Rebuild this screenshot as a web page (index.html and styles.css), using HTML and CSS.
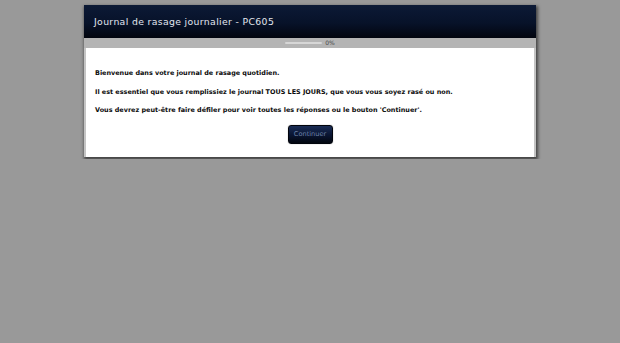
FILE: index.html
```
<!DOCTYPE html>
<html lang="fr">
<head>
<meta charset="utf-8">
<title>Journal de rasage journalier - PC605</title>
<link rel="stylesheet" href="styles.css">
</head>
<body>
<div class="dialog">
  <div class="dialog-header">Journal de rasage journalier - PC605</div>
  <div class="progress-band">
    <div class="progress-track"><div class="progress-fill"></div></div>
    <span class="progress-label">0%</span>
  </div>
  <div class="dialog-body">
    <p>Bienvenue dans votre journal de rasage quotidien.</p>
    <p>Il est essentiel que vous remplissiez le journal TOUS LES JOURS, que vous vous soyez rasé ou non.</p>
    <p class="last">Vous devrez peut-être faire défiler pour voir toutes les réponses ou le bouton 'Continuer'.</p>
    <div class="actions"><button class="btn">Continuer</button></div>
  </div>
</div>
</body>
</html>
```
FILE: styles.css
```
html, body {
  margin: 0;
  padding: 0;
  background: #999999;
  font-family: "DejaVu Sans", sans-serif;
}
body {
  padding-top: 5px;
}
.dialog {
  width: 452px;
  margin: 0 auto;
  background: #c4c4c4;
  box-shadow: 1px 2px 3px 1px rgba(0, 0, 0, 0.55);
}
.dialog-header {
  height: 33px;
  box-sizing: border-box;
  padding: 11px 0 0 10px;
  background: linear-gradient(#0c1a36, #071229 55%, #02050e);
  color: #e2e6ee;
  font-size: 9.3px;
  letter-spacing: 0.35px;
  line-height: 11px;
}
.progress-band {
  height: 10px;
  background: #b4b4b4;
  display: flex;
  align-items: center;
  justify-content: center;
  gap: 3px;
}
.progress-track {
  width: 37px;
  height: 2px;
  background: #d6d6d6;
  border-radius: 1px;
}
.progress-fill {
  width: 0;
  height: 100%;
}
.progress-label {
  font-size: 6px;
  color: #4a4a4a;
  line-height: 6px;
}
.dialog-body {
  margin: 0 2px 2px 2px;
  background: #ffffff;
  padding: 22px 9px 13px 9px;
}
.dialog-body p {
  margin: 0 0 12.4px 0;
  font-size: 6.45px;
  font-weight: bold;
  line-height: 6.2px;
  color: #0a0a0a;
}
.dialog-body p.last {
  margin-bottom: 11.5px;
}
.actions {
  display: flex;
  justify-content: center;
}
.btn {
  width: 45px;
  height: 19px;
  padding: 0;
  border: 1px solid #01040c;
  border-radius: 3px;
  background: linear-gradient(#1a2d55, #0a1634 50%, #02060f);
  color: #6f84ac;
  font-family: "DejaVu Sans", sans-serif;
  font-size: 6.6px;
  box-shadow: 0 0 1px rgba(0,0,0,0.5);
}
```
